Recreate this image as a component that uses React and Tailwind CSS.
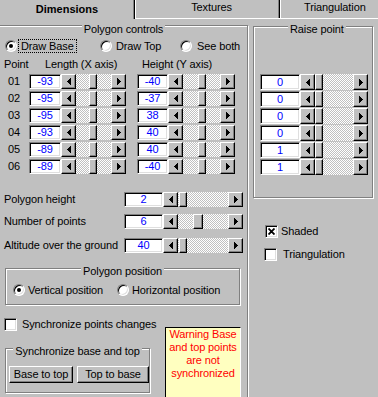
import React from 'react';

const raised = 'border border-t-white border-l-white border-b-black border-r-black shadow-[inset_-1px_-1px_0_#808080]';
const sunken = 'border border-t-[#808080] border-l-[#808080] border-b-white border-r-white shadow-[inset_1px_1px_0_#000,inset_-1px_-1px_0_#dfdfdf]';
const etched = 'border border-[#808080] shadow-[inset_1px_1px_0_#fff,1px_1px_0_#fff]';

const points = [
  ['01', '-93', '-40'],
  ['02', '-95', '-37'],
  ['03', '-95', '38'],
  ['04', '-93', '40'],
  ['05', '-89', '40'],
  ['06', '-89', '-40'],
];

const raise = ['0', '0', '0', '0', '1', '1'];

const Radio = ({ checked }) => (
  <span className={`flex h-[12px] w-[12px] shrink-0 items-center justify-center rounded-full bg-white ${sunken}`}>
    {checked && <span className="h-[4px] w-[4px] rounded-full bg-black" />}
  </span>
);

const Check = ({ checked }) => (
  <span className={`flex h-[13px] w-[13px] shrink-0 items-center justify-center bg-white ${sunken}`}>
    {checked && (
      <svg width="7" height="7" viewBox="0 0 7 7">
        <path d="M0.5 0.5L6.5 6.5M6.5 0.5L0.5 6.5" stroke="#000" strokeWidth="1.8" />
      </svg>
    )}
  </span>
);

const Arrow = ({ left }) => (
  <span className={`flex h-full w-[15px] shrink-0 items-center justify-center bg-[#c0c0c0] ${raised}`}>
    <svg width="4" height="7" viewBox="0 0 4 7" shapeRendering="crispEdges">
      {left ? (
        <g fill="#000">
          <rect x="0" y="3" width="1" height="1" />
          <rect x="1" y="2" width="1" height="3" />
          <rect x="2" y="1" width="1" height="5" />
          <rect x="3" y="0" width="1" height="7" />
        </g>
      ) : (
        <g fill="#000">
          <rect x="0" y="0" width="1" height="7" />
          <rect x="1" y="1" width="1" height="5" />
          <rect x="2" y="2" width="1" height="3" />
          <rect x="3" y="3" width="1" height="1" />
        </g>
      )}
    </svg>
  </span>
);

// horizontal scrollbar: arrow, dithered track with thumb, arrow
const Scroll = ({ className, thumb }) => (
  <div className={`flex h-full shrink-0 ${className}`}>
    <Arrow left />
    <div className="flex h-full flex-1 bg-[image:repeating-conic-gradient(#fff_0_25%,#c0c0c0_0_50%)] bg-[length:2px_2px]">
      <span className={`h-full shrink-0 bg-[#c0c0c0] ${raised} ${thumb}`} />
    </div>
    <Arrow />
  </div>
);

const Field = ({ className, children }) => (
  <div className={`flex h-full shrink-0 items-center justify-center bg-white text-[#0000ff] ${sunken} ${className}`}>
    {children}
  </div>
);

const Button = ({ className, children }) => (
  <div className={`flex h-[17px] shrink-0 items-center justify-center ${raised} ${className}`}>{children}</div>
);

export default function App() {
  return (
    <div className="h-[397px] w-[378px] overflow-hidden bg-[#c0c0c0] font-['Liberation_Sans',Arial,sans-serif] text-[11px] leading-[13px] tracking-[-0.12px] text-black">
      {/* tabs */}
      <div className="flex h-[19px]">
        <div className="h-[19px] w-[135px] shrink-0 border-r border-black pt-[3px] text-center font-bold tracking-normal shadow-[inset_-1px_0_0_#808080]">
          Dimensions
        </div>
        <div className="flex flex-1 flex-col">
          <div className="flex h-[18px]">
            <div className="w-[145px] shrink-0 border-l border-r border-l-white border-r-black pl-[8px] pt-[1px] text-center shadow-[inset_-1px_0_0_#808080]">
              Textures
            </div>
            <div className="flex-1 whitespace-nowrap border-l border-white pl-[23px] pt-[1px]">Triangulation</div>
          </div>
          <div className="h-[1px] bg-white" />
        </div>
      </div>

      <div className="flex">
        {/* left: polygon controls */}
        <div className={`-ml-[3px] mt-[6px] flex h-[400px] w-[251px] shrink-0 flex-col pl-[2px] ${etched}`}>
          <span className="-mt-[3px] h-[13px] self-center bg-[#c0c0c0] px-[2px]">Polygon controls</span>

          <div className="mt-[3px] flex h-[14px] items-center">
            <div className="ml-[5px] flex w-[95px] items-center">
              <Radio checked />
              <span className="ml-[1px] h-[14px] border border-dotted border-black px-[2px] leading-[12px]">Draw Base</span>
            </div>
            <div className="flex w-[80px] items-center">
              <Radio />
              <span className="ml-[4px]">Draw Top</span>
            </div>
            <div className="flex items-center">
              <Radio />
              <span className="ml-[5px]">See both</span>
            </div>
          </div>

          <div className="mt-[5px] flex h-[13px] whitespace-nowrap">
            <span className="ml-[4px] w-[41px]">Point</span>
            <span className="w-[97px]">Length (X axis)</span>
            <span>Height (Y axis)</span>
          </div>

          <div className="mt-[3px] flex flex-col gap-[2px]">
            {points.map(([id, x, y]) => (
              <div key={id} className="flex h-[15px] items-center">
                <span className="ml-[8px] w-[21px] shrink-0">{id}</span>
                <Field className="w-[32px]">{x}</Field>
                <Scroll className="w-[65px]" thumb="ml-[13px] w-[8px]" />
                <Field className="ml-[11px] w-[31px]">{y}</Field>
                <Scroll className="w-[67px]" thumb="ml-[15px] w-[8px]" />
              </div>
            ))}
          </div>

          <div className="mt-[18px] flex h-[15px] items-center">
            <span className="ml-[4px] w-[120px] shrink-0">Polygon height</span>
            <Field className="w-[39px]">2</Field>
            <Scroll className="w-[80px]" thumb="ml-[1px] w-[8px]" />
          </div>
          <div className="mt-[7px] flex h-[15px] items-center">
            <span className="ml-[4px] w-[120px] shrink-0">Number of points</span>
            <Field className="w-[39px]">6</Field>
            <Scroll className="w-[80px]" thumb="ml-[15px] w-[10px]" />
          </div>
          <div className="mt-[9px] flex h-[15px] items-center">
            <span className="ml-[4px] w-[120px] shrink-0 whitespace-nowrap">Altitude over the ground</span>
            <Field className="w-[39px]">40</Field>
            <Scroll className="w-[80px]" thumb="ml-[1px] w-[8px]" />
          </div>

          <div className={`ml-[5px] mt-[15px] flex w-[235px] flex-col pb-[7px] ${etched}`}>
            <span className="-mt-[4px] h-[13px] self-center bg-[#c0c0c0] px-[2px]">Polygon position</span>
            <div className="mt-[5px] flex h-[14px] items-center">
              <div className="ml-[7px] flex w-[104px] items-center">
                <Radio checked />
                <span className="ml-[3px]">Vertical position</span>
              </div>
              <div className="flex items-center">
                <Radio />
                <span className="ml-[3px]">Horizontal position</span>
              </div>
            </div>
          </div>

          <div className="mt-[13px] flex">
            <div className="flex w-[165px] shrink-0 flex-col">
              <div className="ml-[4px] flex h-[13px] items-center whitespace-nowrap">
                <Check />
                <span className="ml-[5px]">Synchronize points changes</span>
              </div>
              <div className={`ml-[5px] mt-[17px] flex w-[145px] flex-col pb-[9px] ${etched}`}>
                <span className="-mt-[4px] h-[13px] self-center whitespace-nowrap bg-[#c0c0c0] px-[2px]">Synchronize base and top</span>
                <div className="mt-[8px] flex gap-[4px] pl-[3px]">
                  <Button className="w-[64px]">Base to top</Button>
                  <Button className="w-[72px]">Top to base</Button>
                </div>
              </div>
            </div>
            <div className="mt-[9px] h-[80px] w-[76px] shrink-0 border border-b-0 border-l-black border-t-black border-r-white bg-[#ffffc0] text-center text-[#ff0000]">
              Warning Base
              <br />
              and top points
              <br />
              are not
              <br />
              synchronized
            </div>
          </div>
        </div>

        {/* right: raise point */}
        <div className="flex flex-1 flex-col">
          <div className={`ml-[5px] mt-[7px] flex h-[172px] w-[120px] flex-col ${etched}`}>
            <span className="-mt-[4px] ml-[34px] h-[13px] self-start bg-[#c0c0c0] px-[2px]">Raise point</span>
            <div className="mt-[38px] flex flex-col gap-[1px]">
              {raise.map((v, i) => (
                <div key={i} className="flex h-[16px]">
                  <Field className="ml-[6px] w-[40px]">{v}</Field>
                  <Scroll className="w-[68px]" thumb="w-[8px]" />
                </div>
              ))}
            </div>
          </div>

          <div className="ml-[17px] mt-[27px] flex h-[13px] items-center">
            <Check checked />
            <span className="ml-[3px]">Shaded</span>
          </div>
          <div className="ml-[16px] mt-[10px] flex h-[13px] items-center">
            <Check />
            <span className="ml-[6px]">Triangulation</span>
          </div>
        </div>
      </div>
    </div>
  );
}
